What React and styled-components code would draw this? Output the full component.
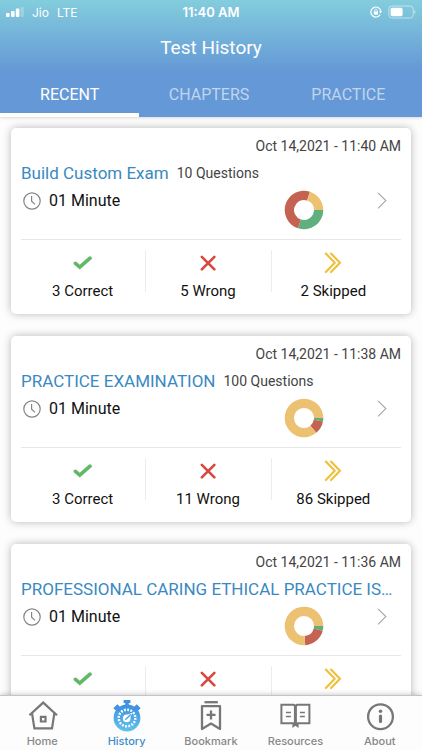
import { useState } from "react";
import styled, { createGlobalStyle } from "styled-components";

const GlobalStyle = createGlobalStyle`
  * {
    box-sizing: border-box;
  }

  body {
    margin: 0;
    font-family: Roboto, "Liberation Sans", sans-serif;
    background-color: #fdfdfd;
  }

  button {
    border: none;
    background: none;
    padding: 0;
    font: inherit;
    cursor: pointer;
  }
`;

const COLORS = { correct: "#5fb07c", wrong: "#c56353", skipped: "#edc172" };

const TABS = ["RECENT", "CHAPTERS", "PRACTICE"];

const TESTS = [
  { id: 1, date: "Oct 14,2021 - 11:40 AM", title: "Build Custom Exam", questions: 10, time: "01 Minute", correct: 3, wrong: 5, skipped: 2 },
  { id: 2, date: "Oct 14,2021 - 11:38 AM", title: "PRACTICE EXAMINATION", questions: 100, time: "01 Minute", correct: 3, wrong: 11, skipped: 86 },
  { id: 3, date: "Oct 14,2021 - 11:36 AM", title: "PROFESSIONAL CARING ETHICAL PRACTICE ISSUES", time: "01 Minute", correct: 4, wrong: 20, skipped: 76 },
];

const point = (fraction, r) => {
  const angle = fraction * Math.PI * 2;
  return `${20 + r * Math.cos(angle)} ${20 + r * Math.sin(angle)}`;
};

// ring that starts at 3 o'clock and runs clockwise
const Donut = ({ correct, wrong, skipped }) => {
  const total = correct + wrong + skipped;
  let start = 0;
  const slices = [
    [correct, COLORS.correct],
    [wrong, COLORS.wrong],
    [skipped, COLORS.skipped],
  ].map(([value, color]) => {
    const end = start + value / total;
    const large = end - start > 0.5 ? 1 : 0;
    const d = `M${point(start, 19.3)}A19.3 19.3 0 ${large} 1 ${point(end, 19.3)}L${point(end, 10)}A10 10 0 ${large} 0 ${point(start, 10)}Z`;
    start = end;
    return <path key={color} d={d} fill={color} />;
  });
  return (
    <svg width="40" height="40" viewBox="0 0 40 40">
      {slices}
    </svg>
  );
};

const Clock = () => (
  <svg width="18" height="18" viewBox="0 0 18 18" fill="none" stroke="#858585" strokeWidth="1.2">
    <circle cx="9" cy="9" r="8.2" />
    <path d="M8.6 4v5.2l3.4 3.2" />
  </svg>
);

const Chevron = () => (
  <svg width="10" height="20" viewBox="0 0 10 20" fill="none" stroke="#a9a9a9" strokeWidth="1.2">
    <path d="M1 2.8 8.8 10.6 1 18.4" />
  </svg>
);

const Check = () => (
  <svg width="20" height="22" viewBox="0 0 20 22" fill="none" stroke="#63b865" strokeWidth="3.6" strokeLinecap="round">
    <path d="M2.4 11.3 6.8 15.2 17 6.2" />
  </svg>
);

const Cross = () => (
  <svg width="20" height="22" viewBox="0 0 20 22" fill="none" stroke="#d9483f" strokeWidth="2.6" strokeLinecap="round">
    <path d="m3.8 4.8 12.6 12.6M16.4 4.8 3.8 17.4" />
  </svg>
);

const Skip = () => (
  <svg width="20" height="22" viewBox="0 0 20 22" fill="none" stroke="#efc03c" strokeWidth="2.2" strokeLinecap="round" strokeLinejoin="round">
    <path d="m2.8 1.6 9 9.2-9 9.2M8 1.6l9 9.2L8 20" />
  </svg>
);

const HomeIcon = () => (
  <svg width="32" height="32" viewBox="0 0 32 32" fill="none" stroke="#777" strokeWidth="2.2">
    <path d="M3.4 15.2 17.2 2.6 31 15.2" />
    <path d="M6.2 13.2v1.2l2.2 14h17.6l2.2-14v-1.2" />
    <path d="M14.9 16.9h4.6v4.6h-4.6z" />
  </svg>
);

const HistoryIcon = () => (
  <svg width="32" height="32" viewBox="0 0 32 32" fill="none">
    <defs>
      <linearGradient id="watch" x1="0" y1="0" x2="0" y2="1">
        <stop offset="0" stopColor="#3c8fdf" />
        <stop offset="1" stopColor="#62c3ea" />
      </linearGradient>
    </defs>
    <circle cx="16" cy="18" r="13.4" fill="url(#watch)" />
    <path d="M12.6 0h6.8v3h-1.6v3h-3.6V3h-1.6zM2.3 8.3l4-4 2.6 2.4-1 1 2 2L8 11.6 6 9.4l-1.2 1.2zM29.7 8.3l-4-4-2.6 2.4 1 1-2 2 1.9 1.9 2-2.2 1.2 1.2z" fill="#4192e0" />
    <circle cx="16" cy="18" r="8.3" stroke="#fff" strokeWidth="2.5" strokeDasharray="1.8 1.46" />
    <circle cx="15.7" cy="18.4" r="3.8" fill="#fff" />
    <path d="m16 14.8 5.5-2-2.6 5.2z" fill="#fff" />
    <path d="m14.8 19.2 4.6-4.4" stroke="#4ba5e3" strokeWidth="1.4" strokeLinecap="round" />
  </svg>
);

const BookmarkIcon = () => (
  <svg width="32" height="32" viewBox="0 0 32 32" fill="none" stroke="#777" strokeWidth="2.3">
    <path d="M9.5 2.2h13.3" />
    <path d="M7 29V6.2h18V29l-9-5.4z" strokeLinejoin="round" />
    <path d="M16 10.4v9M11.5 14.9h9" />
  </svg>
);

const ResourcesIcon = () => (
  <svg width="32" height="32" viewBox="0 0 32 32" fill="none" stroke="#777" strokeWidth="2">
    <path d="M2.4 4.8h12.4l1.6 1 1.6-1h12.4v18.4H18.8l-2.4 1.3-2.4-1.3H2.4z" />
    <path d="M16.4 5v20" strokeWidth="3" />
    <path d="M6.9 12.4h5M6.9 16.4h5M20.9 12.4h5M20.9 16.4h5" strokeWidth="1.5" />
    <path d="M13.4 23.4h6.2V28l-3.2-2.2-3 2.2z" fill="#777" stroke="none" />
  </svg>
);

const AboutIcon = () => (
  <svg width="32" height="32" viewBox="0 0 32 32" fill="none" stroke="#777" strokeWidth="2.3">
    <circle cx="16.5" cy="16.7" r="12.4" />
    <path d="M16.5 16v5.5" strokeWidth="3.2" strokeLinecap="round" />
    <circle cx="16.5" cy="11.2" r="1.8" fill="#777" stroke="none" />
  </svg>
);

const NAV = [
  { label: "Home", Icon: HomeIcon },
  { label: "History", Icon: HistoryIcon },
  { label: "Bookmark", Icon: BookmarkIcon },
  { label: "Resources", Icon: ResourcesIcon },
  { label: "About", Icon: AboutIcon },
];

const StatusBar = () => (
  <Status>
    <StatusSide>
      <svg width="18" height="10" viewBox="0 0 18 10" fill="#fff">
        <rect x="0" y="6" width="3.6" height="4" rx="1" />
        <rect x="5" y="4" width="3.6" height="6" rx="1" />
        <rect x="9.8" y="1.5" width="3.6" height="8.5" rx="1" />
        <rect x="14.6" y="0" width="3.2" height="10" rx="1" opacity="0.25" />
      </svg>
      <span>Jio</span>
      <span>LTE</span>
    </StatusSide>
    <StatusTime>11:40 AM</StatusTime>
    <StatusSide $end>
      <svg width="12" height="12" viewBox="0 0 12 12" fill="none" stroke="#fff" strokeWidth="1.2">
        <path d="M10.2 8.6A5 5 0 1 1 10.8 5" />
        <path d="M9 5.2h3.2l-1.6 2.4z" fill="#fff" stroke="none" />
        <rect x="3.8" y="5.4" width="4.2" height="3.2" fill="#fff" stroke="none" />
        <path d="M4.7 5.6V4.4a1.2 1.2 0 0 1 2.4 0v1.2" strokeWidth="0.8" />
      </svg>
      <svg width="28" height="14" viewBox="0 0 28 14" fill="none">
        <rect x="0.8" y="1" width="24.4" height="12" rx="3" stroke="#fff" strokeOpacity="0.5" />
        <rect x="2.6" y="2.8" width="12" height="8.4" rx="1.6" fill="#fff" />
        <path d="M26.3 5v4q1.3-.6 1.3-2t-1.3-2" fill="#fff" fillOpacity="0.5" />
      </svg>
    </StatusSide>
  </Status>
);

const TestCard = ({ test }) => (
  <Card>
    <DateText>{test.date}</DateText>
    <TitleRow>
      <Title>{test.title}</Title>
      {test.questions && <Questions>{test.questions} Questions</Questions>}
    </TitleRow>
    <InfoRow>
      <Duration>
        <Clock />
        {test.time}
      </Duration>
      <Donut correct={test.correct} wrong={test.wrong} skipped={test.skipped} />
      <OpenButton aria-label={`Open ${test.title}`}>
        <Chevron />
      </OpenButton>
    </InfoRow>
    <Stats>
      <Stat>
        <Check />
        {test.correct} Correct
      </Stat>
      <Stat>
        <Cross />
        {test.wrong} Wrong
      </Stat>
      <Stat>
        <Skip />
        {test.skipped} Skipped
      </Stat>
    </Stats>
  </Card>
);

const App = () => {
  const [tab, setTab] = useState("RECENT");
  const [page, setPage] = useState("History");

  return (
    <>
      <GlobalStyle />
      <Screen>
        <Header>
          <StatusBar />
          <Heading>Test History</Heading>
          <Tabs>
            {TABS.map((name) => (
              <Tab key={name} $active={tab === name} onClick={() => setTab(name)}>
                {name}
              </Tab>
            ))}
          </Tabs>
        </Header>
        <List>
          {TESTS.map((test) => (
            <TestCard key={test.id} test={test} />
          ))}
        </List>
        <BottomNav>
          {NAV.map(({ label, Icon }) => (
            <NavButton key={label} $active={page === label} onClick={() => setPage(label)}>
              <Icon />
              {label}
            </NavButton>
          ))}
        </BottomNav>
      </Screen>
    </>
  );
};

const Screen = styled.div`
  display: flex;
  flex-direction: column;
  height: 100vh;
`;

const Header = styled.header`
  flex: none;
  background: linear-gradient(#83cddd 0, #6498d6 72px);
  color: #fff;
  box-shadow: 0 1px 3px rgba(0, 0, 0, 0.15);
`;

const Status = styled.div`
  display: grid;
  grid-template-columns: 1fr auto 1fr;
  align-items: center;
  height: 24px;
  padding: 0 6px;
  font-family: Inter, Roboto, sans-serif;
  font-size: 12px;
`;

const StatusSide = styled.div`
  display: flex;
  align-items: center;
  gap: ${({ $end }) => ($end ? "6px" : "8px")};
  justify-content: ${({ $end }) => ($end ? "flex-end" : "flex-start")};
`;

const StatusTime = styled.span`
  font-size: 13px;
  font-weight: 600;
`;

const Heading = styled.h1`
  margin: 0;
  font-size: 19px;
  font-weight: 400;
  line-height: 48px;
  text-align: center;
`;

const Tabs = styled.nav`
  display: grid;
  grid-template-columns: repeat(3, 1fr);
  padding-right: 4px;
`;

const Tab = styled.button`
  height: 45px;
  color: ${({ $active }) => ($active ? "#fff" : "rgba(255, 255, 255, 0.6)")};
  border-top: 4px solid transparent;
  border-bottom: 4px solid ${({ $active }) => ($active ? "#fff" : "transparent")};
  font-size: 16px;
`;

const List = styled.main`
  flex: 1;
  min-height: 0;
  display: flex;
  flex-direction: column;
  gap: 22px;
  padding: 11px 11px 22px;
  overflow-y: auto;
  scrollbar-width: none;
`;

const Card = styled.article`
  flex: none;
  padding: 8px 10px 10px;
  background-color: #fff;
  border-radius: 5px;
  box-shadow: 0 0 8px rgba(0, 0, 0, 0.28);
`;

const DateText = styled.div`
  color: #444;
  font-size: 14px;
  line-height: 20px;
  text-align: right;
`;

const TitleRow = styled.div`
  display: flex;
  align-items: center;
  gap: 8px;
  margin-top: 6px;
  padding-right: 4px;
  line-height: 22px;
`;

const Title = styled.h2`
  margin: 0;
  color: #3a89bf;
  font-size: 17px;
  font-weight: 400;
  overflow: hidden;
  white-space: nowrap;
  text-overflow: ellipsis;
`;

const Questions = styled.span`
  color: #444;
  font-size: 14px;
  white-space: nowrap;
`;

const InfoRow = styled.div`
  display: flex;
  align-items: flex-start;
  height: 49px;
  margin-top: 6px;
  padding-right: 14px;
`;

const Duration = styled.div`
  flex: 1;
  display: flex;
  align-items: center;
  gap: 8px;
  padding-left: 2px;
  color: #111;
  font-size: 16px;
  line-height: 22px;
`;

const OpenButton = styled.button`
  display: flex;
  margin-left: 53px;
`;

const Stats = styled.div`
  display: grid;
  grid-template-columns: repeat(3, 1fr);
  border-top: 1px solid #e8e8e8;
  padding: 10px 4px 0 0;
`;

const Stat = styled.div`
  display: flex;
  flex-direction: column;
  align-items: center;
  gap: 7px;
  height: 54px;
  padding: 2px 2px 0 0;
  color: #111;
  font-size: 15px;
  line-height: 20px;
  background: linear-gradient(#ececec, #ececec) right top / 1px 42px no-repeat;

  &:last-child {
    background: none;
  }
`;

const BottomNav = styled.nav`
  flex: none;
  display: grid;
  grid-template-columns: repeat(5, 1fr);
  background-color: #fdfdfd;
  border-top: 1px solid #c4c4c4;
  box-shadow: 0 0 6px rgba(0, 0, 0, 0.25);
  z-index: 1;
`;

const NavButton = styled.button`
  display: flex;
  flex-direction: column;
  align-items: center;
  gap: 2px;
  padding: 4px 0 2px;
  color: ${({ $active }) => ($active ? "#3c8ccb" : "#888")};
  font-family: Inter, Roboto, sans-serif;
  font-size: 11px;
  font-weight: 500;
  line-height: 14px;
`;

export default App;
